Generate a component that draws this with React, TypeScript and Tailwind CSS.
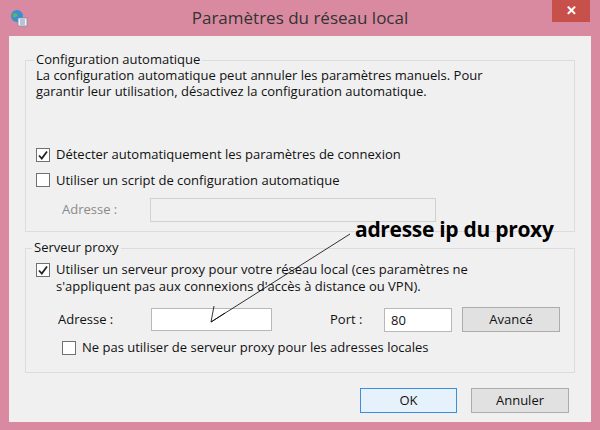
import React from "react";

const Check = ({ checked }: { checked: boolean }) => (
  <div className="w-[14px] h-[14px] border border-[#707070] bg-white flex items-center justify-center shrink-0">
    {checked && (
      <svg width="12" height="12" viewBox="0 0 12 12">
        <path d="M2 6.5 L4.8 9.5 L10 2.5" stroke="#222" strokeWidth="1.8" fill="none" />
      </svg>
    )}
  </div>
);

export default function App() {
  return (
    <div className="relative w-[600px] h-[430px] bg-[#d98aa0] overflow-hidden text-[13px] text-[#111]" style={{ fontFamily: '"Open Sans","Noto Sans",sans-serif' }}>
      <div className="h-[36px] flex items-center relative">
        <div className="ml-[10px] w-[18px] h-[18px]">
          <svg width="18" height="18" viewBox="0 0 18 18">
            <circle cx="7" cy="7" r="6" fill="#3a8fd0" />
            <path d="M3 5 Q6 3 8 6 Q6 9 3 8Z" fill="#5cb85c" />
            <rect x="8" y="9" width="9" height="8" fill="#f2f2f2" stroke="#7a8ca8" strokeWidth="0.8" />
            <path d="M10 11h5M10 13h5M10 15h5" stroke="#5b7fb5" strokeWidth="0.8" />
          </svg>
        </div>
        <div className="absolute left-0 right-0 top-[5px] text-center text-[17px] text-[#333]">Paramètres du réseau local</div>
        <div className="absolute right-[10px] top-0 w-[38px] h-[22px] bg-[#c7504b] flex items-center justify-center text-white text-[13px] font-bold">✕</div>
      </div>
      <div className="mx-[9px] h-[386px] bg-[#f0f0f0] px-[16px] pt-[24px]">
        <div className="relative border border-[#dcdcdc] h-[172px] px-[10px] pt-[6px]">
          <span className="absolute -top-[10px] left-[8px] px-[2px] bg-[#f0f0f0] leading-[17px]">Configuration automatique</span>
          <p className="leading-[16px]">La configuration automatique peut annuler les paramètres manuels. Pour<br />garantir leur utilisation, désactivez la configuration automatique.</p>
          <div className="mt-[46px] flex items-center gap-[6px]"><Check checked /> Détecter automatiquement les paramètres de connexion</div>
          <div className="mt-[6px] flex items-center gap-[6px]"><Check checked={false} /> Utiliser un script de configuration automatique</div>
          <div className="mt-[8px] flex items-center">
            <span className="w-[114px] pl-[26px] text-[#8a8a8a]">Adresse :</span>
            <div className="w-[286px] h-[24px] border border-[#d0d0d0] bg-[#f0f0f0]" />
          </div>
        </div>
        <div className="relative border border-[#dcdcdc] h-[125px] mt-[16px] px-[10px] pt-[12px]">
          <span className="absolute -top-[10px] left-[6px] px-[2px] bg-[#f0f0f0] leading-[17px]">Serveur proxy</span>
          <div className="flex gap-[6px]">
            <div className="pt-[2px]"><Check checked /></div>
            <p className="leading-[17px]">Utiliser un serveur proxy pour votre réseau local (ces paramètres ne<br />s'appliquent pas aux connexions d'accès à distance ou VPN).</p>
          </div>
          <div className="mt-[12px] flex items-center">
            <span className="w-[115px] pl-[22px]">Adresse :</span>
            <div className="w-[121px] h-[23px] border border-[#b8b8b8] bg-white" />
            <span className="ml-[58px] w-[54px]">Port :</span>
            <div className="w-[68px] h-[24px] border border-[#b8b8b8] bg-white pl-[6px] leading-[22px]">80</div>
            <div className="ml-[10px] w-[98px] h-[25px] border border-[#acacac] bg-[#e1e1e1] flex items-center justify-center">Avancé</div>
          </div>
          <div className="mt-[6px] ml-[26px] flex items-center gap-[6px]"><Check checked={false} /> Ne pas utiliser de serveur proxy pour les adresses locales</div>
        </div>
        <div className="mt-[15px] flex justify-end gap-[14px] pr-[6px]">
          <div className="w-[97px] h-[25px] border border-[#3c8de0] bg-[#e5f1fb] flex items-center justify-center">OK</div>
          <div className="w-[98px] h-[25px] border border-[#acacac] bg-[#e1e1e1] flex items-center justify-center">Annuler</div>
        </div>
      </div>
      <div className="absolute left-[355px] top-[215px] text-[21px] font-bold text-black leading-[28px] tracking-[-0.3px]" style={{ fontFamily: '"Open Sans",sans-serif' }}>adresse ip du proxy</div>
      <svg className="absolute left-0 top-0 pointer-events-none" width="600" height="430">
        <path d="M350 234 L211 322" stroke="#000" strokeWidth="0.8" fill="none" />
        <path d="M214 306 L211 322 L225 313" stroke="#000" strokeWidth="0.8" fill="none" />
      </svg>
    </div>
  );
}
